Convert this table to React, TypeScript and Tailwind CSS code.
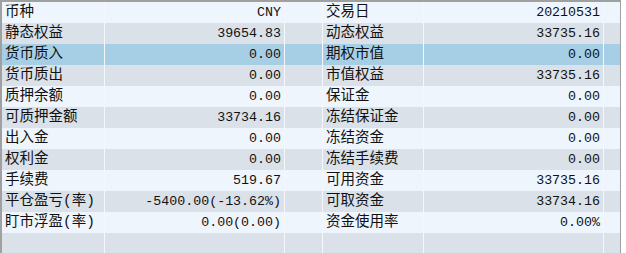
import React from "react";

type Row = [string, string, string, string];

const rows: Row[] = [
  ["币种", "CNY", "交易日", "20210531"],
  ["静态权益", "39654.83", "动态权益", "33735.16"],
  ["货币质入", "0.00", "期权市值", "0.00"],
  ["货币质出", "0.00", "市值权益", "33735.16"],
  ["质押余额", "0.00", "保证金", "0.00"],
  ["可质押金额", "33734.16", "冻结保证金", "0.00"],
  ["出入金", "0.00", "冻结资金", "0.00"],
  ["权利金", "0.00", "冻结手续费", "0.00"],
  ["手续费", "519.67", "可用资金", "33735.16"],
  ["平仓盈亏(率)", "-5400.00(-13.62%)", "可取资金", "33734.16"],
  ["盯市浮盈(率)", "0.00(0.00)", "资金使用率", "0.00%"],
  ["", "", "", ""],
];

const font = {
  fontFamily: '"Liberation Mono", "Noto Sans CJK SC", monospace',
};

const Cell = ({
  w,
  right,
  children,
}: {
  w: string;
  right?: boolean;
  children?: React.ReactNode;
}) => (
  <div
    className={`${w} shrink-0 h-full flex items-center border-r border-[#f4f7fb] px-[3px] whitespace-nowrap overflow-hidden ${
      right ? "justify-end text-[13.3px]" : "text-[14.5px]"
    }`}
  >
    {children}
  </div>
);

export default function App() {
  return (
    <div className="w-[626px] h-[253px] bg-white overflow-hidden text-[#111]" style={font}>
      <div className="w-[621px] h-[253px] border-t-2 border-l-2 border-r border-[#a0a0a0] overflow-hidden">
        {rows.map((r, i) => {
          const bg =
            i === 2 ? "bg-[#a6cfe6]" : i % 2 === 0 ? "bg-[#eff5fc]" : "bg-[#dbe1e8]";
          return (
            <div key={i} className={`flex h-[21px] ${bg}`}>
              <Cell w="w-[103px]">{r[0]}</Cell>
              <Cell w="w-[180px]" right>
                {r[1]}
              </Cell>
              <Cell w="w-[38px]" />
              <Cell w="w-[101px]">{r[2]}</Cell>
              <Cell w="w-[180px]" right>
                {r[3]}
              </Cell>
              <div className="w-[15px] shrink-0" />
            </div>
          );
        })}
      </div>
    </div>
  );
}
